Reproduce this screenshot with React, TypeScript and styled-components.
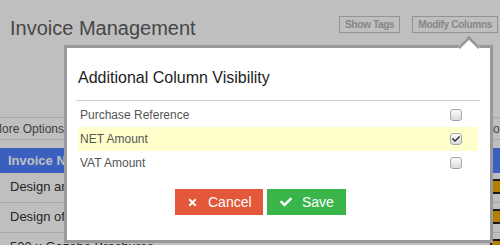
import { FunctionComponent } from 'react';
import styled, { createGlobalStyle } from 'styled-components';
import { FaTimes, FaCheck } from 'react-icons/fa';

const GlobalStyle = createGlobalStyle`
  html, body {
    margin: 0;
    padding: 0;
  }

  body {
    font-family: 'Liberation Sans', Arial, sans-serif;
    overflow: hidden;
  }
`;

const Page = styled.div`
  position: relative;
  width: 500px;
  height: 245px;
  overflow: hidden;
  background: #fff;
`;

const Header = styled.div`
  display: flex;
  justify-content: space-between;
  align-items: flex-start;
  height: 117px;
  padding: 16px 2px 0 10px;
  box-sizing: border-box;
`;

const Title = styled.h1`
  margin: 0;
  padding-top: 1px;
  font-size: 20px;
  font-weight: normal;
  line-height: 23px;
  color: #5e5e5e;
`;

const HeaderActions = styled.div`
  display: flex;
  gap: 12px;
`;

const TagButton = styled.button`
  height: 17px;
  margin: 0;
  padding: 0 5px;
  border: 1px solid #c4c4c4;
  background: #fff;
  color: #b5b5b5;
  font-family: inherit;
  font-size: 10.2px;
  font-weight: bold;
  letter-spacing: -0.4px;
  line-height: 15px;
`;

const Toolbar = styled.div`
  display: flex;
  justify-content: space-between;
  align-items: center;
  height: 21px;
  border-top: 1px solid #e0e0e0;
  border-bottom: 1px solid #e0e0e0;
  font-size: 12px;
  color: #555;
`;

const MoreOptions = styled.span`
  margin-left: -8px;
`;

const Pivot = styled.span`
  margin-right: -3px;
`;

const Table = styled.div`
  margin-top: 8px;
  font-size: 13px;
`;

const HeadRow = styled.div`
  display: flex;
  align-items: center;
  height: 25px;
  padding-left: 8px;
  background: #4f7fff;
  color: #fff;
  font-weight: bold;
`;

const BodyRow = styled.div`
  display: flex;
  justify-content: space-between;
  align-items: center;
  height: 30px;
  padding: 0 0 2px 10px;
  box-sizing: border-box;
  border-bottom: 1px solid #e0e0e0;
  color: #333;
`;

const StatusIcon = styled.span`
  width: 10px;
  height: 11px;
  margin-right: -4px;
  border: 2px solid #222;
  border-radius: 4px;
  background: #f2a900;
`;

const Overlay = styled.div`
  position: absolute;
  inset: 0;
  background: rgba(0, 0, 0, 0.25);
`;

const Popover = styled.div`
  position: absolute;
  left: 64px;
  top: 45px;
  width: 429px;
  height: 198px;
  box-sizing: border-box;
  border: 3px solid #999;
  background: #fff;
  padding: 21px 10px 24px 9px;
`;

const Arrow = styled.span`
  position: absolute;
  top: -9px;
  left: 394px;
  width: 16px;
  height: 16px;
  box-sizing: border-box;
  background: #fff;
  border-top: 3px solid #999;
  border-left: 3px solid #999;
  transform: rotate(45deg);
`;

const PopoverTitle = styled.h2`
  margin: 0;
  padding: 0 0 13px 2px;
  font-size: 16px;
  font-weight: normal;
  line-height: 18px;
  color: #222;
  border-bottom: 1px solid #ccc;
`;

const OptionList = styled.div`
  margin: 2px 2px 0;
`;

const Option = styled.label<{ $active?: boolean }>`
  display: flex;
  justify-content: space-between;
  align-items: center;
  height: 24px;
  padding: 0 16px 0 2px;
  background: ${p => (p.$active ? '#ffffcc' : 'transparent')};
  font-size: 12px;
  color: #555;
`;

const Check = styled.span<{ $checked?: boolean }>`
  display: flex;
  align-items: center;
  justify-content: center;
  width: 12px;
  height: 12px;
  box-sizing: border-box;
  border: 1px solid #a5a5a5;
  border-radius: 3px;
  background: linear-gradient(#fafafa, #dcdcdc);
  color: #333;
  font-size: 8px;
`;

const Actions = styled.div`
  display: flex;
  gap: 4px;
  margin-top: 14px;
  padding-left: 99px;
`;

const ActionButton = styled.button<{ $tone: 'cancel' | 'save' }>`
  display: flex;
  align-items: center;
  gap: 10px;
  height: 26px;
  width: ${p => (p.$tone === 'cancel' ? '88px' : '79px')};
  padding: 0 0 0 ${p => (p.$tone === 'cancel' ? '12px' : '13px')};
  border: none;
  background: ${p => (p.$tone === 'cancel' ? '#e3573a' : '#39b54a')};
  color: #fff;
  font-family: inherit;
  font-size: 14px;
`;

const columns = [
  { label: 'Purchase Reference', checked: false },
  { label: 'NET Amount', checked: true },
  { label: 'VAT Amount', checked: false },
];

const invoices = ['Design and Print', 'Design of Website', '500 x Gazebo Brochures'];

const App: FunctionComponent = () => {
  return (
    <Page>
      <GlobalStyle />
      <Header>
        <Title>Invoice Management</Title>
        <HeaderActions>
          <TagButton>Show Tags</TagButton>
          <TagButton>Modify Columns</TagButton>
        </HeaderActions>
      </Header>
      <Toolbar>
        <MoreOptions>More Options</MoreOptions>
        <Pivot>Pivot</Pivot>
      </Toolbar>
      <Table>
        <HeadRow>Invoice Name</HeadRow>
        {invoices.map(name => (
          <BodyRow key={name}>
            {name}
            <StatusIcon />
          </BodyRow>
        ))}
      </Table>
      <Overlay />
      <Popover>
        <Arrow />
        <PopoverTitle>Additional Column Visibility</PopoverTitle>
        <OptionList>
          {columns.map(col => (
            <Option key={col.label} $active={col.checked}>
              {col.label}
              <Check $checked={col.checked}>{col.checked && <FaCheck />}</Check>
            </Option>
          ))}
        </OptionList>
        <Actions>
          <ActionButton $tone="cancel">
            <FaTimes size={11} />
            Cancel
          </ActionButton>
          <ActionButton $tone="save">
            <FaCheck size={12} />
            Save
          </ActionButton>
        </Actions>
      </Popover>
    </Page>
  );
};

export default App;
